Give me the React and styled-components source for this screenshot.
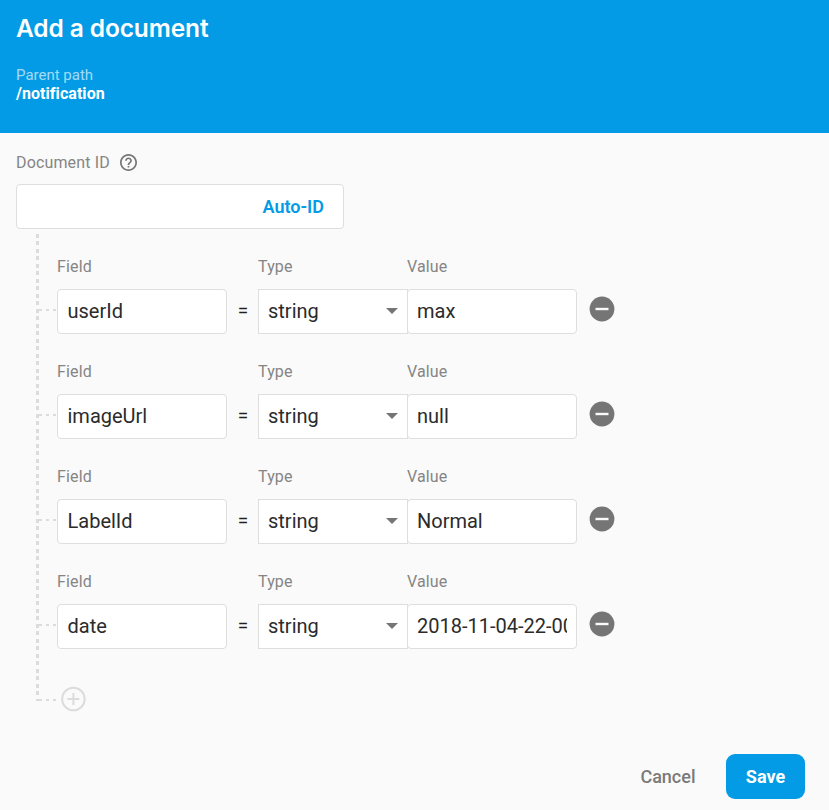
import React from 'react';
import styled, { createGlobalStyle } from 'styled-components';

const blue = '#039be5';
const line = '#dedede';

const GlobalStyle = createGlobalStyle`
  * { box-sizing: border-box; }
  body { margin: 0; background: #fafafa; font-family: Roboto, "Liberation Sans", sans-serif; }
  button, input { font-family: inherit; }
`;

const Dialog = styled.main`
  width: 829px;
  height: 810px;
  background: #fafafa;
  display: flex;
  flex-direction: column;
  overflow: hidden;
`;

const Header = styled.header`
  height: 133px;
  flex: none;
  background: ${blue};
  color: #fff;
  padding: 12px 16px 0;
`;

const Title = styled.h1`
  margin: 0 0 22px;
  font: 600 24.5px/32px Inter, sans-serif;
  letter-spacing: -0.12px;
`;

const PathLabel = styled.div`
  font-size: 15px;
  line-height: 18px;
  color: rgba(255, 255, 255, 0.65);
`;

const PathValue = styled.div`
  font-size: 16px;
  line-height: 19px;
  font-weight: 700;
  letter-spacing: 0.05px;
`;

const Content = styled.section`
  padding: 20px 16px 0;
`;

const LabelRow = styled.div`
  display: flex;
  align-items: center;
  gap: 10px;
  height: 19px;
  margin-bottom: 12px;
`;

const Label = styled.label`
  display: block;
  font-size: 16px;
  line-height: 19px;
  letter-spacing: 0.15px;
  color: #858585;
`;

const IdBox = styled.div`
  width: 328px;
  height: 45px;
  border: 1px solid ${line};
  border-radius: 4px;
  background: #fff;
  display: flex;
  align-items: center;
  justify-content: flex-end;
  padding-right: 19px;
`;

const AutoId = styled.button`
  border: 0;
  padding: 0;
  background: none;
  color: ${blue};
  font-size: 18px;
  line-height: 22px;
  font-weight: 600;
`;

const Tree = styled.div`
  margin: 5px 0 0 20px;
  width: 580px;
  height: 467px;
  padding-top: 23px;
  background: repeating-linear-gradient(#dcdcdc 0 3.75px, transparent 3.75px 7.5px) 0 0 / 3px 467px no-repeat;
`;

const FieldRow = styled.div`
  height: 105px;
  display: grid;
  grid-template-columns: 21px 170px 31px 149px 170px 38px;
  grid-template-rows: 19px 45px;
  row-gap: 13px;
`;

const Cell = styled(Label)`
  grid-column: ${(p) => p.$column};
  grid-row: 1;
`;

const Branch = styled.div`
  grid-column: 1;
  grid-row: 2;
  width: 18px;
  height: 2px;
  margin: ${(p) => p.$top || '20px'} 0 0 3px;
  background: repeating-linear-gradient(90deg, #dcdcdc 0 3px, transparent 3px 7px);
`;

const TextInput = styled.input`
  grid-row: 2;
  min-width: 0;
  width: 170px;
  height: 45px;
  border: 1px solid ${line};
  border-radius: 4px;
  background: #fff;
  padding: 0 9px 2px;
  outline: none;
  color: #2b2b2b;
  font-size: 20px;
  letter-spacing: 0;
`;

const FieldInput = styled(TextInput)`
  padding-left: 9.5px;
`;

const Equals = styled.span`
  grid-row: 2;
  text-align: center;
  padding-left: 1px;
  font-size: 19px;
  line-height: 43px;
  color: #212121;
`;

const Select = styled.button`
  grid-row: 2;
  width: 150px;
  border: 1px solid ${line};
  background: #fff;
  display: flex;
  align-items: center;
  justify-content: space-between;
  padding: 0 9px 2px;
  color: #2b2b2b;
  font-size: 20px;
  letter-spacing: 0;
`;

const Remove = styled.button`
  grid-row: 2;
  border: 0;
  padding: 0;
  margin: 7px 0 0 12px;
  width: 26px;
  height: 26px;
  background: none;
  display: flex;
`;

const AddRow = styled.div`
  height: 26px;
  margin-top: 9px;
  display: flex;
  align-items: flex-start;
`;

const Add = styled.button`
  border: 0;
  padding: 0;
  margin-left: 3px;
  width: 26px;
  height: 26px;
  background: none;
  display: flex;
`;

const Footer = styled.footer`
  margin-top: auto;
  padding: 0 24px 11px 0;
  display: flex;
  justify-content: flex-end;
  align-items: center;
  gap: 30.5px;
`;

const Cancel = styled.button`
  border: 0;
  padding: 0;
  background: none;
  color: #7a7a7a;
  font-size: 18px;
  font-weight: 500;
`;

const Save = styled.button`
  width: 79px;
  height: 45px;
  border: 0;
  border-radius: 9px;
  padding: 0;
  background: ${blue};
  color: #fff;
  font-size: 18px;
  font-weight: 700;
`;

const fields = [
  ['userId', 'max'],
  ['imageUrl', 'null'],
  ['LabelId', 'Normal'],
  ['date', '2018-11-04-22-00-00'],
];

const HelpIcon = () => (
  <svg width="17" height="17" viewBox="2 2 20 20" fill="#757575">
    <path d="M11 18h2v-2h-2v2zm1-16C6.48 2 2 6.48 2 12s4.48 10 10 10 10-4.48 10-10S17.52 2 12 2zm0 18c-4.41 0-8-3.59-8-8s3.59-8 8-8 8 3.59 8 8-3.59 8-8 8zm0-14c-2.21 0-4 1.79-4 4h2c0-1.1.9-2 2-2s2 .9 2 2c0 2-3 1.75-3 5h2c0-2.25 3-2.5 3-5 0-2.21-1.79-4-4-4z" />
  </svg>
);

const MinusIcon = () => (
  <svg width="26" height="26" viewBox="0 0 26 26">
    <circle cx="13" cy="13" r="12.4" fill="#757575" />
    <path d="M6.5 11.8h13v2.4h-13z" fill="#fafafa" />
  </svg>
);

const PlusIcon = () => (
  <svg width="26" height="26" viewBox="0 0 26 26" fill="none" stroke="#dcdcdc" strokeWidth="2">
    <circle cx="13.4" cy="13" r="11.3" />
    <path d="M13.4 7v12M7.4 13h12" />
  </svg>
);

export default function App() {
  return (
    <>
      <GlobalStyle />
      <Dialog>
        <Header>
          <Title>Add a document</Title>
          <PathLabel>Parent path</PathLabel>
          <PathValue>/notification</PathValue>
        </Header>
        <Content>
          <LabelRow>
            <Label>Document ID</Label>
            <HelpIcon />
          </LabelRow>
          <IdBox><AutoId>Auto-ID</AutoId></IdBox>
          <Tree>
            {fields.map(([name, value]) => (
              <FieldRow key={name}>
                <Cell $column={2}>Field</Cell>
                <Cell $column={4}>Type</Cell>
                <Cell $column={5}>Value</Cell>
                <Branch />
                <FieldInput defaultValue={name} aria-label="Field" />
                <Equals>=</Equals>
                <Select>
                  string
                  <svg width="12" height="6" viewBox="0 0 12 6"><path d="M0 0h12L6 6z" fill="#757575" /></svg>
                </Select>
                <TextInput defaultValue={value} aria-label="Value" />
                <Remove aria-label="Remove field"><MinusIcon /></Remove>
              </FieldRow>
            ))}
            <AddRow>
              <Branch $top="13px" />
              <Add aria-label="Add field"><PlusIcon /></Add>
            </AddRow>
          </Tree>
        </Content>
        <Footer>
          <Cancel>Cancel</Cancel>
          <Save>Save</Save>
        </Footer>
      </Dialog>
    </>
  );
}
